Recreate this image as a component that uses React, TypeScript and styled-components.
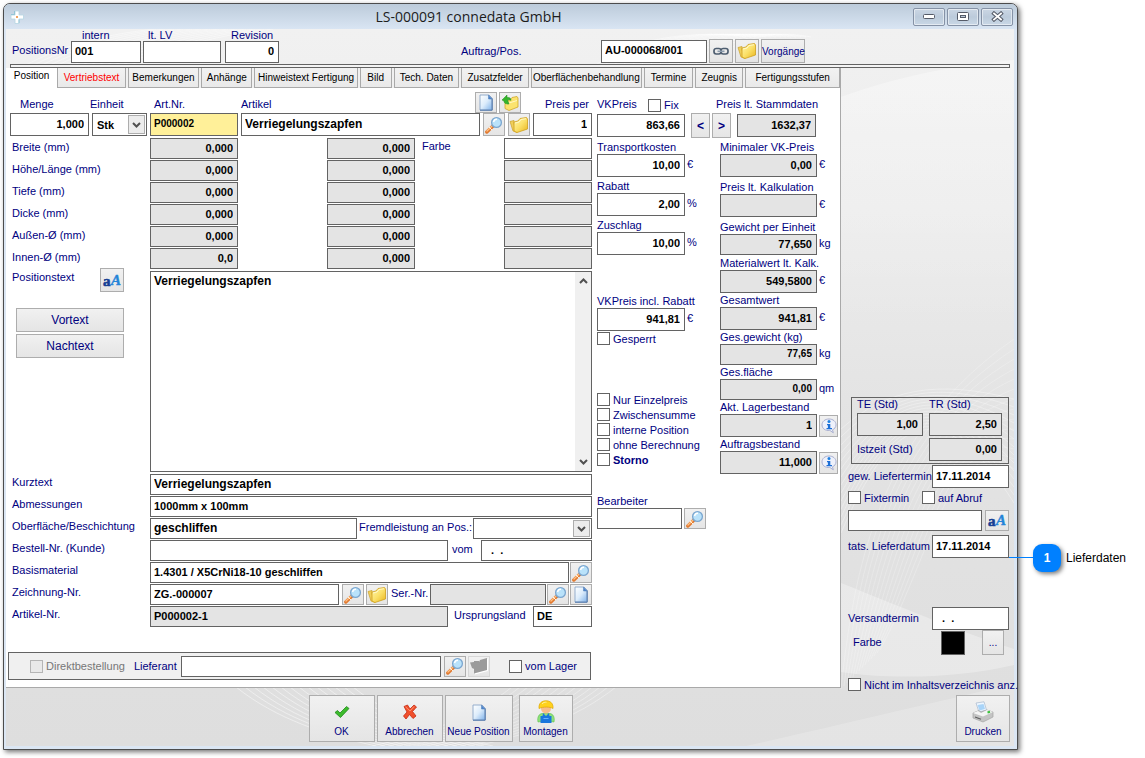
import React from "react";
import styled, { createGlobalStyle, css } from "styled-components";

const navy = "#00007f";
const line = "#636363";

const GlobalStyle = createGlobalStyle`
  *, *::before, *::after { box-sizing: border-box; }
  body { margin: 0; background: #fff; font-family: "Liberation Sans", Arial, sans-serif; font-size: 11px; color: ${navy}; }
  button, input, select, textarea { font-family: inherit; font-size: 11px; margin: 0; }
`;

/* ---------- window frame ---------- */

const Page = styled.div`
  padding: 3px 127px 8px 3px;
`;

const Window = styled.main`
  border: 1px solid #4c4c4c;
  border-radius: 7px 7px 0 0;
  background: #dbe6f3;
  box-shadow: 2px 2px 5px rgba(0, 0, 0, 0.55);
  padding: 0 3px 3px 2px;
`;

const TitleBar = styled.header`
  display: flex;
  align-items: center;
  height: 25px;
  margin: 0 -3px 0 -2px;
  padding: 0 4px 0 6px;
  border-radius: 6px 6px 0 0;
  background: linear-gradient(#bccbda, #d9e5f3);
`;

const Title = styled.h1`
  flex: 1;
  margin: 0;
  text-align: center;
  font: 14px/24px "Open Sans", "Segoe UI", sans-serif;
  color: #1c1c1c;
`;

const CaptionButtons = styled.div`
  display: flex;
  gap: 2px;
`;

const CaptionButton = styled.button`
  display: grid;
  place-items: center;
  width: 32px;
  height: 18px;
  padding: 0;
  border: 1px solid #8592a6;
  border-radius: 2px;
  background: linear-gradient(#cbd7e4, #bccbdb 50%, #c9d7e6);
  box-shadow: inset 0 0 0 1px rgba(255, 255, 255, 0.5);
`;

const Content = styled.div`
  position: relative;
  isolation: isolate;
  background: linear-gradient(#f1f1f1, #ececec 25%, #e3e3e3 55%, #e1e1e1 75%, #dedede);
`;

const Backdrop = styled.svg`
  position: absolute;
  inset: 0;
  z-index: -1;
  width: 100%;
  height: 100%;
`;

/* ---------- shared controls ---------- */

const Label = styled.label<{ $w?: number; $strong?: boolean; $muted?: boolean }>`
  flex: none;
  ${(p) => p.$w && `width: ${p.$w}px;`}
  line-height: 13px;
  white-space: nowrap;
  color: ${(p) => (p.$muted ? "#777" : navy)};
  font-weight: ${(p) => (p.$strong ? "bold" : "normal")};
`;

const Input = styled.input<{ $w?: number; $tall?: boolean; $right?: boolean; $size?: number; $tone?: string }>`
  ${(p) => (p.$w ? `flex: none; width: ${p.$w}px;` : "flex: 1; min-width: 0; width: 0;")}
  height: ${(p) => (p.$tall ? 23 : 21)}px;
  padding: 0 4px 2px 3px;
  border: 1px solid ${line};
  border-radius: 0;
  background: ${(p) => p.$tone || "#fff"};
  color: #000;
  font-weight: bold;
  font-size: ${(p) => p.$size || 11}px;
  text-align: ${(p) => (p.$right ? "right" : "left")};
  outline: none;
`;

const grey = "#e4e4e4";

const face = css`
  border: 1px solid #adadad;
  background: linear-gradient(#f1f1f1, #e5e5e5);
  color: ${navy};
  padding: 0;
`;

const IconButton = styled.button<{ $size?: number; $h?: number; $quiet?: boolean }>`
  ${face}
  flex: none;
  display: grid;
  place-items: center;
  width: ${(p) => p.$size || 22}px;
  height: ${(p) => p.$h || p.$size || 21}px;
  ${(p) => p.$quiet && "border-color: #d6d6d6;"}
`;

const TextButton = styled.button<{ $w: number; $h: number; $small?: boolean; $strong?: boolean }>`
  ${face}
  flex: none;
  width: ${(p) => p.$w}px;
  height: ${(p) => p.$h}px;
  font-size: ${(p) => (p.$small ? 10 : 12)}px;
  font-weight: ${(p) => (p.$strong ? "bold" : "normal")};
`;

const Box = styled.input.attrs({ type: "checkbox" })`
  appearance: none;
  flex: none;
  width: 13px;
  height: 13px;
  border: 1px solid ${line};
  background: #fff;
  &:disabled { border-color: #b5b5b5; background: #e9e9e9; }
`;

const CheckLabel = styled.label<{ $strong?: boolean; $muted?: boolean }>`
  display: flex;
  align-items: center;
  gap: 3px;
  height: 15px;
  white-space: nowrap;
  color: ${(p) => (p.$muted ? "#777" : navy)};
  font-weight: ${(p) => (p.$strong ? "bold" : "normal")};
`;

const Check = (p: { text: string; strong?: boolean; disabled?: boolean }) => (
  <CheckLabel $strong={p.strong} $muted={p.disabled}>
    <Box disabled={p.disabled} />
    {p.text}
  </CheckLabel>
);

const SelectShell = styled.div<{ $w: number; $h: number }>`
  position: relative;
  flex: none;
  width: ${(p) => p.$w}px;
  height: ${(p) => p.$h}px;
`;

const SelectBox = styled.select`
  appearance: none;
  width: 100%;
  height: 100%;
  padding: 0 20px 0 4px;
  border: 1px solid ${line};
  border-radius: 0;
  background: #fff;
  color: #000;
  font-weight: bold;
`;

const SelectArrow = styled.span`
  position: absolute;
  top: 2px;
  right: 2px;
  bottom: 2px;
  width: 17px;
  display: grid;
  place-items: center;
  border: 1px solid #adadad;
  background: #ececec;
  pointer-events: none;
`;

const Chevron = ({ up }: { up?: boolean }) => (
  <svg width="9" height="6" viewBox="0 0 9 6" fill="none" stroke="#505050" strokeWidth="2">
    <path d={up ? "M1 5 4.500 1.500 8 5" : "M1 1 4.500 4.500 8 1"} />
  </svg>
);

const Select = (p: { id: string; w: number; h: number; value: string }) => (
  <SelectShell $w={p.w} $h={p.h}>
    <SelectBox id={p.id} defaultValue={p.value}>
      <option>{p.value}</option>
    </SelectBox>
    <SelectArrow>
      <Chevron />
    </SelectArrow>
  </SelectShell>
);

/* ---------- icons ---------- */

const Doc = () => (
  <svg width="16" height="17" viewBox="0 0 16 17">
    <defs>
      <linearGradient id="doc" x1="0" y1="0" x2="1" y2="1">
        <stop offset="0" stopColor="#fff" />
        <stop offset=".5" stopColor="#dcecfb" />
        <stop offset="1" stopColor="#7fb2ea" />
      </linearGradient>
    </defs>
    <path d="M2 1h9l3 3v12H2z" fill="url(#doc)" stroke="#8ba6c8" strokeWidth=".9" />
    <path d="M14.200 4.500V16.200H2" fill="none" stroke="#4d74a8" />
    <path d="M10.500 1v4H14z" fill="#4b83cf" stroke="#5d86bb" strokeWidth=".6" />
  </svg>
);

const Folder = ({ muted }: { muted?: boolean }) => (
  <svg width="20" height="18" viewBox="0 0 20 18">
    <defs>
      <linearGradient id="folder" x1="0" y1="0" x2="1" y2="1">
        <stop offset="0" stopColor="#fff6ae" />
        <stop offset=".5" stopColor="#fbe16a" />
        <stop offset="1" stopColor="#e9b51d" />
      </linearGradient>
    </defs>
    {muted ? (
      <>
        <path d="M2 6.500 6 6V5h5v1l1-2 7-2v12L6 17.500V13l-2-1z" fill="#fff" />
        <path d="M1 5.500 5 5V4h5v1l1-2 7-2v12L5 16.500V12L3 11z" fill="#9b9b9b" />
      </>
    ) : (
      <>
        <path d="M1 5.500 5 4.500V8l3 8.500-4-1.500z" fill="#f0cf5b" stroke="#caa02a" strokeWidth=".7" />
        <path d="M5 6 9 5l2-2.500L17.500 1.500 18.500 3v10L8 16.500 5 15z" fill="url(#folder)" stroke="#cfa01c" strokeWidth=".8" />
        <path d="M6 7 10 6l2-2.500 5-.8" fill="none" stroke="#fffbd2" strokeWidth=".9" />
      </>
    )}
  </svg>
);

const ImportFolder = () => (
  <svg width="18" height="18" viewBox="0 0 18 18">
    <path d="M4 8 9 6l2-2.500 5-1 1 1.500v9l-9 3.500-4-2z" fill="#fbe36e" stroke="#d0a727" strokeWidth=".8" />
    <path d="M5 10 16 6.500" stroke="#fff8c4" />
    <path d="M1 6 6 1v2.500c3-.5 4 1 4 3C9 5.500 8 5.500 6.500 6L8 10c-3 .5-5-1-5-3z" fill="#35b52b" stroke="#1b8a1b" strokeWidth=".5" />
  </svg>
);

const Magnifier = () => (
  <svg width="18" height="18" viewBox="0 0 18 18">
    <path d="M8 10 1.800 16" stroke="#e27a30" strokeWidth="3.400" strokeLinecap="round" />
    <path d="M7.300 9.800 2 15" stroke="#ffc083" strokeWidth="1.400" strokeLinecap="round" />
    <path d="m4 11 3 3" stroke="#fff2df" strokeWidth="1" />
    <path d="m7 8.500 2.500 2.500" stroke="#8b95a3" strokeWidth="2" />
    <circle cx="11.500" cy="6.500" r="4.900" fill="#b9e2fa" stroke="#7ba6cf" strokeWidth="1.300" />
    <path d="M8.500 6a3.500 3.500 0 0 1 3.500-2.800" fill="none" stroke="#fff" strokeWidth="1.500" />
  </svg>
);

const LinkIcon = () => (
  <svg width="16" height="9" viewBox="0 0 16 9" fill="none">
    <rect x="1" y="1.500" width="7" height="5.500" rx="2.200" stroke="#4e5e70" strokeWidth="1.700" />
    <rect x="8" y="1.500" width="7" height="5.500" rx="2.200" stroke="#4e5e70" strokeWidth="1.700" />
    <path d="M4.500 4.300h7" stroke="#8c9cad" strokeWidth="1.600" />
  </svg>
);

const FontIcon = () => (
  <svg width="20" height="19" viewBox="0 0 20 19" aria-hidden="true">
    <g fontFamily="Liberation Serif" fontWeight="bold">
      <text x="1" y="15" fontSize="15" fill="#173f94" stroke="#173f94" strokeWidth=".6">a</text>
      <text x="9" y="14" fontSize="15" fontStyle="italic" fill="#2484d8" stroke="#2484d8" strokeWidth=".4">A</text>
    </g>
  </svg>
);

const Info = () => (
  <svg width="16" height="16" viewBox="0 0 16 16">
    <path d="M8 1c4 0 7 2.500 7 5.800 0 2.500-1.500 4-3.500 5l.8 3-3.500-2.400C4 13 1 10.300 1 6.900 1 3.500 4 1 8 1z" fill="#eef1fb" stroke="#a9afd0" />
    <circle cx="8" cy="3.600" r="1.500" fill="#1d7fe0" />
    <path d="M6 6h3.300v4H11v1.300H5.500V10h1.400V7.300H6z" fill="#1d6fd6" />
  </svg>
);

const Tick = () => (
  <svg width="16" height="14" viewBox="0 0 16 14">
    <path d="M1 7.500 3.500 5.500 6 8 12.500 1.500 15 3.500 6.500 12.500z" fill="#3dbb2c" stroke="#20891a" strokeWidth=".8" />
  </svg>
);

const Cross = () => (
  <svg width="16" height="16" viewBox="0 0 16 16">
    <path d="M2 2.500 5.500 1 8 5 12 1l2.500 2L10.500 7.500 14 12l-3 2.500L7.500 10.500 4 15 1.500 12 5 8z" fill="#f0502c" stroke="#c52a12" strokeWidth=".8" />
    <path d="M3.500 2.800 8 7l4-4.500" fill="none" stroke="#ff9a78" strokeWidth=".9" />
  </svg>
);

const Worker = () => (
  <svg width="20" height="24" viewBox="0 0 20 24">
    <path d="M2 22c-1-5 1-8 4-8.500h8c3 .5 5 3.500 4 8.500l-3-.5H5z" fill="#8ee27a" stroke="#5bbd4c" strokeWidth=".6" />
    <path d="M4.500 23v-7h2l.5-3 3 3 3-3 .5 3h2v7z" fill="#1976dd" />
    <path d="M7.500 18.500h5" stroke="#66b2ff" />
    <circle cx="10" cy="8.500" r="5" fill="#f8bd8a" />
    <path d="M3 8.500C2.500 3 6 .8 10 .8S17.500 3 17 8.500c-3-1.800-10-2-14 0z" fill="#ffd21c" stroke="#dda400" strokeWidth=".7" />
    <path d="M6 4c1-1.500 3-2 4.500-1.800" stroke="#fff3a0" fill="none" />
  </svg>
);

const Printer = () => (
  <svg width="22" height="22" viewBox="0 0 22 22">
    <path d="M4 2 12 .800 14.500 9 7 11z" fill="#eef6ff" stroke="#a8b8cb" strokeWidth=".7" />
    <path d="M5.500 4 11.500 3l1.500 5-5.500 1.500z" fill="#a9d4f8" />
    <path d="M1 12 7 9.500 9 11l6-2 6 2v5l-10 5L1 17z" fill="#c4c4c4" stroke="#a5a5a5" strokeWidth=".7" />
    <path d="m1 12 10 3.500L21 11l-6-2-6 3-3-2z" fill="#f5f5f5" />
    <path d="m3 16 6 2.200" stroke="#5c5c5c" strokeWidth="1.200" />
    <path d="m15.500 11.500 2.500-.8" stroke="#38c23a" strokeWidth="2" />
  </svg>
);

const AppLogo = () => (
  <svg width="14" height="14" viewBox="0 0 14 14">
    <path d="M5 1h4v4h4.500v4H9v4.500H5V9H1V5h4z" fill="#fff" stroke="#b5d5e2" strokeWidth=".8" />
    <path d="M4.500 1v3.500H1M9 9.500V13" fill="none" stroke="#7fbdd0" strokeWidth=".7" />
    <circle cx="7" cy="7" r="1" fill="#e8862e" />
  </svg>
);

/* ---------- header ---------- */

const HeaderBar = styled.div`
  display: flex;
  align-items: flex-end;
  gap: 2px;
  height: 35px;
  padding: 0 4px 1px 6px;
`;

const Lead = styled(Label)`
  width: 57px;
  padding-bottom: 4px;
  line-height: 17px;
`;

const Stack = styled.div<{ $inset?: number; $after?: number }>`
  display: flex;
  flex-direction: column;
  flex: none;
  margin-right: ${(p) => p.$after || 0}px;
  > label { padding-left: ${(p) => p.$inset || 0}px; line-height: 12px; }
  > input { flex: none; height: 22px; }
`;

const Spacer = styled.div<{ $w?: number }>`
  flex: ${(p) => (p.$w ? "none" : 1)};
  width: ${(p) => p.$w || 0}px;
`;

const OrderGroup = styled.div`
  display: flex;
  align-items: center;
  gap: 2px;
  margin-right: 205px;
`;

const Rule = styled.hr`
  height: 4px;
  margin: 0 4px;
  border: 1px solid ${line};
  background: #f4f4f4;
`;

/* ---------- tabs ---------- */

const Workspace = styled.div`
  display: flex;
`;

const Panel = styled.section`
  flex: 1;
  min-width: 0;
  border-right: 1px solid #a9a9a9;
  border-bottom: 1px solid #a9a9a9;
  background: #fff;
`;

const Tabs = styled.nav`
  display: flex;
  gap: 2px;
  height: 20px;
  background: #f0f0f0;
`;

const Tab = styled.button<{ $grow: number; $active?: boolean; $alert?: boolean }>`
  flex: ${(p) => p.$grow} 1 0;
  min-width: 0;
  padding: 0;
  border: solid #a9a9a9;
  border-width: 0 1px 1px;
  background: linear-gradient(#f2f2f2, #e9e9e9);
  color: ${(p) => (p.$alert ? "#ff0000" : "#000")};
  font-size: 10px;
  white-space: nowrap;
  ${(p) => p.$active && "border-color: #fff; background: #fff; padding-bottom: 4px; margin-right: -2px;"}
`;

const tabs: [string, number][] = [
  ["Position", 51],
  ["Vertriebstext", 69],
  ["Bemerkungen", 72],
  ["Anhänge", 51],
  ["Hinweistext Fertigung", 105],
  ["Bild", 31],
  ["Tech. Daten", 66],
  ["Zusatzfelder", 68],
  ["Oberflächenbehandlung", 113],
  ["Termine", 49],
  ["Zeugnis", 48],
  ["Fertigungsstufen", 96],
];

/* ---------- position form ---------- */

const Form = styled.div`
  display: flex;
  gap: 5px;
  padding: 3px 2px 0 4px;
`;

const MainColumn = styled.div`
  flex: 1;
  min-width: 0;
`;

const LabelRow = styled.div`
  display: flex;
  align-items: flex-end;
  height: 22px;
  gap: 2px;
  > label { padding-bottom: 1px; line-height: 15px; }
`;

const Row = styled.div`
  display: flex;
  align-items: center;
  gap: 2px;
`;

const ItemRow = styled(Row)`
  gap: 3px;
  height: 23px;
`;

const Split = styled.div`
  display: grid;
  grid-template-columns: 140px 1fr;
`;

const LabelColumn = styled.div`
  display: flex;
  flex-direction: column;
  padding-left: 2px;
  > label { line-height: 22px; }
`;

const TextTools = styled.div`
  display: flex;
  justify-content: space-between;
  width: 112px;
  padding-bottom: 16px;
  > label { line-height: 18px; }
`;

const SideButtons = styled.div`
  display: flex;
  flex-direction: column;
  gap: 2px;
  padding-left: 4px;
`;

const FieldColumn = styled.div`
  display: flex;
  flex-direction: column;
  gap: 1px;
  padding-top: 2px;
`;

const MeasureRow = styled.div`
  display: grid;
  grid-template-columns: 88px 1fr 88px 1fr 88px;
  > input:nth-of-type(2) { grid-column: 3; }
  > label { grid-column: 4; padding-left: 7px; line-height: 17px; }
  > input:nth-of-type(3) { grid-column: 5; }
`;

const Editor = styled.div`
  display: flex;
  height: 201px;
  margin-top: 1px;
  border: 1px solid ${line};
  background: #fff;
`;

const EditorText = styled.textarea`
  flex: 1;
  min-width: 0;
  padding: 3px;
  border: 0;
  resize: none;
  overflow: hidden;
  color: #000;
  font-weight: bold;
  font-size: 12px;
  line-height: 13px;
  outline: none;
`;

const Rail = styled.div`
  display: flex;
  flex-direction: column;
  justify-content: space-between;
  align-items: center;
  width: 16px;
  padding: 6px 0;
  background: #f0f0f0;
`;

const DetailList = styled.div`
  display: flex;
  flex-direction: column;
  gap: 1px;
  padding-top: 2px;
`;

const DetailRow = styled.div`
  display: flex;
  align-items: center;
  height: 21px;
  > label { padding-bottom: 2px; }
  > label:first-child { width: 140px; padding: 0 0 4px 2px; }
`;

const SupplierBar = styled.div`
  display: flex;
  align-items: center;
  height: 28px;
  margin: 25px 1px 7px -2px;
  padding: 0 13px 0 21px;
  border: 1px solid ${line};
  background: #f0f0f0;
`;

/* ---------- price columns ---------- */

const PriceArea = styled.div`
  flex: none;
  width: 241px;
`;

const PriceHead = styled(LabelRow)`
  > label:nth-child(1) { width: 49px; }
`;

const PriceTop = styled(Row)`
  height: 25px;
`;

const PriceColumns = styled.div`
  display: grid;
  grid-template-columns: 123px 118px;
  padding-top: 3px;
`;

const Group = styled.div<{ $gap?: number; $top?: number }>`
  display: flex;
  flex-direction: column;
  gap: ${(p) => p.$gap || 0}px;
  padding-top: ${(p) => p.$top || 0}px;
`;

const PriceBlock = styled.div`
  display: flex;
  flex-direction: column;
`;

const Unit = styled.span`
  padding-bottom: 3px;
`;

interface PriceProps {
  id: string;
  label: string;
  value: string;
  unit?: string;
  locked?: boolean;
  low?: boolean;
  small?: boolean;
  info?: boolean;
}

const PriceField = (p: PriceProps) => (
  <PriceBlock>
    <Label htmlFor={p.id}>{p.label}</Label>
    <Row>
      <Input
        id={p.id}
        $w={p.locked ? 97 : 88}
        $tall={!p.low}
        $right
        $size={p.small ? 10 : 11}
        $tone={p.locked ? grey : "#fff"}
        readOnly={p.locked}
        defaultValue={p.value}
      />
      {p.unit && <Unit>{p.unit}</Unit>}
      {p.info && (
        <IconButton $size={19} $h={22} aria-label={`Info ${p.label}`}>
          <Info />
        </IconButton>
      )}
    </Row>
  </PriceBlock>
);

/* ---------- delivery column ---------- */

const Sidebar = styled.aside`
  flex: none;
  width: 173px;
  display: flex;
  flex-direction: column;
  margin-bottom: -4px;
  padding: 329px 5px 0 6px;
`;

const TimeBox = styled.fieldset`
  display: grid;
  grid-template-columns: 66px 73px;
  column-gap: 6px;
  row-gap: 2px;
  align-items: center;
  height: 67px;
  margin: 0 0 0 4px;
  padding: 0 5px 4px;
  border: 1px solid ${line};
`;

const SideRow = styled.div<{ $gap?: number; $h: number }>`
  position: relative;
  display: flex;
  align-items: center;
  height: ${(p) => p.$h}px;
  margin-top: ${(p) => p.$gap || 0}px;
  padding-left: 1px;
  > label:first-child { flex: 1; }
`;

const CheckPair = styled.div`
  display: grid;
  grid-template-columns: 74px auto;
  margin-top: 2px;
  padding-left: 1px;
`;

const Swatch = styled.input`
  appearance: none;
  width: 24px;
  height: 24px;
  margin: 0 17px 0 0;
  padding: 0;
  border: 1px solid ${line};
  background: #000;
  &::-webkit-color-swatch-wrapper { padding: 0; }
  &::-webkit-color-swatch { border: 0; }
`;

const Callout = styled.div`
  position: absolute;
  left: 100%;
  top: 9px;
  display: flex;
  align-items: center;
  color: #000;
  font-size: 12px;
  white-space: nowrap;
`;

const CalloutLine = styled.span`
  width: 24px;
  height: 14px;
  margin-bottom: 14px;
  border-bottom: 1px solid #0080ff;
`;

const CalloutBadge = styled.span`
  display: grid;
  place-items: center;
  width: 28px;
  height: 28px;
  margin-right: 5px;
  border-radius: 9px;
  background: #0080ff;
  box-shadow: 2px 2px 4px rgba(0, 0, 0, 0.5);
  color: #fff;
  font-weight: bold;
`;

/* ---------- footer ---------- */

const Footer = styled.footer`
  display: flex;
  padding: 7px 4px 4px 0;
`;

const Actions = styled.div`
  flex: 1;
  display: flex;
  justify-content: center;
  gap: 2px;
`;

const ActionButton = styled.button<{ $w: number; $apart?: boolean }>`
  ${face}
  display: flex;
  flex-direction: column;
  align-items: center;
  justify-content: flex-end;
  gap: 2px;
  width: ${(p) => p.$w}px;
  height: 47px;
  padding-bottom: 4px;
  font-size: 10px;
  white-space: nowrap;
  ${(p) => p.$apart && "margin-left: 4px;"}
  > span { display: grid; place-items: center; height: 24px; }
`;

const FooterEnd = styled.div`
  display: flex;
  justify-content: flex-end;
  width: 135px;
`;

const Action = (p: { text: string; w: number; apart?: boolean; children: React.ReactNode }) => (
  <ActionButton $w={p.w} $apart={p.apart}>
    <span>{p.children}</span>
    {p.text}
  </ActionButton>
);

const measures = [
  ["Breite (mm)", "0,000"],
  ["Höhe/Länge (mm)", "0,000"],
  ["Tiefe (mm)", "0,000"],
  ["Dicke (mm)", "0,000"],
  ["Außen-Ø (mm)", "0,000"],
  ["Innen-Ø (mm)", "0,0"],
];

const rays = Array.from({ length: 14 }, (_, i) => i);

const Waves = () => (
  <Backdrop viewBox="0 0 1008 717" preserveAspectRatio="none" fill="none" aria-hidden="true">
    <defs>
      <linearGradient id="sheen" x1="0" y1="0" x2="0" y2="1">
        <stop offset="0" stopColor="#fff" stopOpacity=".35" />
        <stop offset="1" stopColor="#fff" stopOpacity="0" />
      </linearGradient>
    </defs>
    <path d="M760 100C850 55 930 38 1008 31V300H760z" fill="url(#sheen)" />
    <path d="M835 554C900 580 960 605 1008 620V636C950 650 880 650 835 643z" fill="#fff" opacity=".3" />
    <path d="M740 717C860 690 950 668 1008 655V717z" fill="#fff" opacity=".2" />
    <g stroke="#fff">
      {rays.map((i) => (
        <path key={i} d={`M${835 + i * 3} ${660 - i * 3}C${850 + i * 6} 520 ${880 + i * 5} 400 1008 ${310 + i * 10}`} strokeOpacity=".22" />
      ))}
      {rays.map((i) => (
        <path key={i} d={`M835 ${400 + i * 8}C880 ${360 + i * 3} 930 350 1008 ${370 + i * 8}`} strokeOpacity=".3" />
      ))}
      {rays.map((i) => (
        <path key={i} d={`M${20 + i * 8} 36C${50 + i * 9} 20 ${90 + i * 9} 6 ${150 + i * 9} 0`} strokeOpacity=".4" />
      ))}
      {rays.map((i) => (
        <path key={i} d={`M${590 + i * 9} 36C${620 + i * 8} 10 ${690 + i * 6} 0 ${740 + i * 5} 8`} strokeOpacity=".4" />
      ))}
      {rays.map((i) => (
        <path key={i} d={`M${230 + i * 9} 658C${270 + i * 9} 690 ${320 + i * 9} 706 ${370 + i * 9} 717`} strokeOpacity=".45" />
      ))}
      {rays.map((i) => (
        <path key={i} d={`M${610 - i * 8} 658C${570 - i * 8} 690 ${520 - i * 8} 706 ${470 - i * 8} 717`} strokeOpacity=".35" />
      ))}
    </g>
  </Backdrop>
);

export default function App() {
  return (
    <Page>
      <GlobalStyle />
      <Window>
        <TitleBar>
          <AppLogo />
          <Title>LS-000091 connedata GmbH</Title>
          <CaptionButtons>
            <CaptionButton aria-label="Minimieren">
              <svg width="12" height="6" viewBox="0 0 12 6">
                <rect x=".5" y=".5" width="11" height="4" rx="1" fill="#fff" stroke="#555b68" />
              </svg>
            </CaptionButton>
            <CaptionButton aria-label="Maximieren">
              <svg width="12" height="10" viewBox="0 0 12 10">
                <rect x=".5" y=".5" width="11" height="8" rx="1" fill="#fff" stroke="#555b68" />
                <rect x="3.500" y="3.500" width="5" height="2" fill="#bccbdb" stroke="#555b68" />
              </svg>
            </CaptionButton>
            <CaptionButton aria-label="Schließen">
              <svg width="13" height="11" viewBox="0 0 13 11" strokeLinecap="square">
                <path d="m3 2.500 7 6m0-6-7 6" stroke="#555b68" strokeWidth="3.800" />
                <path d="m3 2.500 7 6m0-6-7 6" stroke="#fff" strokeWidth="1.800" />
              </svg>
            </CaptionButton>
          </CaptionButtons>
        </TitleBar>

        <Content>
          <Waves />
          <HeaderBar>
            <Lead htmlFor="intern">PositionsNr</Lead>
            <Stack $inset={11}>
              <Label htmlFor="intern">intern</Label>
              <Input id="intern" $w={70} defaultValue="001" />
            </Stack>
            <Stack $inset={5} $after={2}>
              <Label htmlFor="lv">lt. LV</Label>
              <Input id="lv" $w={78} />
            </Stack>
            <Stack $inset={6}>
              <Label htmlFor="revision">Revision</Label>
              <Input id="revision" $w={54} $right defaultValue="0" />
            </Stack>
            <Spacer />
            <OrderGroup>
              <Label htmlFor="order" $w={138}>Auftrag/Pos.</Label>
              <Input id="order" $w={106} $tall defaultValue="AU-000068/001" />
              <IconButton $size={24} aria-label="Verknüpfung"><LinkIcon /></IconButton>
              <IconButton $size={24} aria-label="Auftrag öffnen"><Folder /></IconButton>
              <TextButton $w={44} $h={24} $small>Vorgänge</TextButton>
            </OrderGroup>
          </HeaderBar>
          <Rule />

          <Workspace>
            <Panel>
              <Tabs>
                {tabs.map(([name, grow], i) => (
                  <Tab key={name} $grow={grow} $active={i === 0} $alert={i === 1}>{name}</Tab>
                ))}
              </Tabs>

              <Form>
                <MainColumn>
                  <LabelRow>
                    <Spacer $w={8} />
                    <Label htmlFor="menge" $w={68}>Menge</Label>
                    <Label htmlFor="einheit" $w={62}>Einheit</Label>
                    <Label htmlFor="artnr" $w={85}>Art.Nr.</Label>
                    <Label htmlFor="artikel">Artikel</Label>
                    <Spacer />
                    <IconButton aria-label="Neuer Artikel"><Doc /></IconButton>
                    <IconButton aria-label="Artikel übernehmen"><ImportFolder /></IconButton>
                    <Spacer $w={20} />
                    <Label htmlFor="preisper" $w={47}>Preis per</Label>
                  </LabelRow>
                  <ItemRow>
                    <Input id="menge" $w={79} $tall $right defaultValue="1,000" />
                    <Select id="einheit" w={55} h={23} value="Stk" />
                    <Input id="artnr" $w={88} $tall $size={10} $tone="#fff099" defaultValue="P000002" />
                    <Input id="artikel" $tall $size={12} defaultValue="Verriegelungszapfen" />
                    <IconButton $h={23} aria-label="Artikel suchen"><Magnifier /></IconButton>
                    <IconButton $h={23} aria-label="Artikel öffnen"><Folder /></IconButton>
                    <Input id="preisper" $w={59} $tall $right defaultValue="1" />
                  </ItemRow>

                  <Split>
                    <LabelColumn>
                      {measures.map(([name], i) => (
                        <Label key={name} htmlFor={`m${i}`}>{name}</Label>
                      ))}
                      <TextTools>
                        <Label htmlFor="postext">Positionstext</Label>
                        <IconButton $size={24} aria-label="Schrift"><FontIcon /></IconButton>
                      </TextTools>
                      <SideButtons>
                        <TextButton $w={108} $h={24}>Vortext</TextButton>
                        <TextButton $w={108} $h={24}>Nachtext</TextButton>
                      </SideButtons>
                    </LabelColumn>
                    <FieldColumn>
                      {measures.map(([name, value], i) => (
                        <MeasureRow key={name}>
                          <Input id={`m${i}`} $w={88} $right $tone={grey} readOnly defaultValue={value} />
                          <Input aria-label={`${name} 2`} $w={88} $right $tone={grey} readOnly defaultValue="0,000" />
                          {i === 0 && <Label htmlFor="farbe">Farbe</Label>}
                          {i === 0 ? (
                            <Input id="farbe" $w={88} />
                          ) : (
                            <Input aria-label={`${name} 3`} $w={88} $tone={grey} readOnly />
                          )}
                        </MeasureRow>
                      ))}
                      <Editor>
                        <EditorText id="postext" defaultValue="Verriegelungszapfen" />
                        <Rail>
                          <Chevron up />
                          <Chevron />
                        </Rail>
                      </Editor>
                    </FieldColumn>
                  </Split>

                  <DetailList>
                    <DetailRow>
                      <Label htmlFor="kurz">Kurztext</Label>
                      <Input id="kurz" $size={12} defaultValue="Verriegelungszapfen" />
                    </DetailRow>
                    <DetailRow>
                      <Label htmlFor="abm">Abmessungen</Label>
                      <Input id="abm" defaultValue="1000mm x 100mm" />
                    </DetailRow>
                    <DetailRow>
                      <Label htmlFor="ober">Oberfläche/Beschichtung</Label>
                      <Input id="ober" $size={12} defaultValue="geschliffen" />
                      <Spacer $w={2} />
                      <Label htmlFor="fremd" $w={114}>Fremdleistung an Pos.:</Label>
                      <Select id="fremd" w={119} h={21} value="" />
                    </DetailRow>
                    <DetailRow>
                      <Label htmlFor="bestell">Bestell-Nr. (Kunde)</Label>
                      <Input id="bestell" />
                      <Spacer $w={4} />
                      <Label htmlFor="vom" $w={29}>vom</Label>
                      <Input id="vom" $w={111} defaultValue="  .  ." />
                    </DetailRow>
                    <DetailRow>
                      <Label htmlFor="basis">Basismaterial</Label>
                      <Input id="basis" defaultValue="1.4301 / X5CrNi18-10 geschliffen" />
                      <Spacer $w={1} />
                      <IconButton aria-label="Material suchen"><Magnifier /></IconButton>
                    </DetailRow>
                    <DetailRow>
                      <Label htmlFor="zeich">Zeichnung-Nr.</Label>
                      <Input id="zeich" defaultValue="ZG.-000007" />
                      <Spacer $w={3} />
                      <IconButton aria-label="Zeichnung suchen"><Magnifier /></IconButton>
                      <Spacer $w={2} />
                      <IconButton aria-label="Zeichnung öffnen"><Folder /></IconButton>
                      <Spacer $w={3} />
                      <Label htmlFor="serie" $w={39}>Ser.-Nr.</Label>
                      <Input id="serie" $w={116} $tone={grey} readOnly />
                      <Spacer $w={1} />
                      <IconButton aria-label="Serie suchen"><Magnifier /></IconButton>
                      <Spacer $w={1} />
                      <IconButton aria-label="Neue Serie"><Doc /></IconButton>
                    </DetailRow>
                    <DetailRow>
                      <Label htmlFor="artikelnr">Artikel-Nr.</Label>
                      <Input id="artikelnr" $tone={grey} readOnly defaultValue="P000002-1" />
                      <Spacer $w={6} />
                      <Label htmlFor="land" $w={79}>Ursprungsland</Label>
                      <Input id="land" $w={59} defaultValue="DE" />
                    </DetailRow>
                  </DetailList>

                  <SupplierBar>
                    <Check text="Direktbestellung" disabled />
                    <Spacer $w={9} />
                    <Label htmlFor="lieferant" $w={47}>Lieferant</Label>
                    <Input id="lieferant" />
                    <Spacer $w={3} />
                    <IconButton aria-label="Lieferant suchen"><Magnifier /></IconButton>
                    <Spacer $w={2} />
                    <IconButton $quiet disabled aria-label="Lieferant öffnen"><Folder muted /></IconButton>
                    <Spacer $w={19} />
                    <Check text="vom Lager" />
                  </SupplierBar>
                </MainColumn>

                <PriceArea>
                  <PriceHead>
                    <Label htmlFor="vk">VKPreis</Label>
                    <Check text="Fix" />
                    <Spacer />
                    <Label htmlFor="stamm" $w={122}>Preis lt. Stammdaten</Label>
                  </PriceHead>
                  <PriceTop>
                    <Input id="vk" $w={88} $tall $right defaultValue="863,66" />
                    <Spacer $w={2} />
                    <TextButton $w={19} $h={25} $strong>&lt;</TextButton>
                    <TextButton $w={19} $h={25} $strong>&gt;</TextButton>
                    <Spacer $w={2} />
                    <Input id="stamm" $w={79} $tall $right $tone={grey} readOnly defaultValue="1632,37" />
                  </PriceTop>
                  <PriceColumns>
                    <div>
                      <Group $gap={3}>
                        <PriceField id="transport" label="Transportkosten" value="10,00" unit="€" />
                        <PriceField id="rabatt" label="Rabatt" value="2,00" unit="%" />
                        <PriceField id="zuschlag" label="Zuschlag" value="10,00" unit="%" />
                      </Group>
                      <Group $top={40}>
                        <PriceField id="incl" label="VKPreis incl. Rabatt" value="941,81" unit="€" />
                        <Check text="Gesperrt" />
                      </Group>
                      <Group $top={46}>
                        <Check text="Nur Einzelpreis" />
                        <Check text="Zwischensumme" />
                        <Check text="interne Position" />
                        <Check text="ohne Berechnung" />
                        <Check text="Storno" strong />
                      </Group>
                      <Group $top={28}>
                        <Label htmlFor="bearb">Bearbeiter</Label>
                        <Row>
                          <Input id="bearb" $w={85} />
                          <IconButton aria-label="Bearbeiter suchen"><Magnifier /></IconButton>
                        </Row>
                      </Group>
                    </div>
                    <div>
                      <Group $gap={4}>
                        <PriceField id="minvk" label="Minimaler VK-Preis" value="0,00" unit="€" locked />
                        <PriceField id="kalk" label="Preis lt. Kalkulation" value="" unit="€" locked />
                        <PriceField id="gewicht" label="Gewicht per Einheit" value="77,650" unit="kg" locked low />
                      </Group>
                      <Group $gap={1} $top={2}>
                        <PriceField id="material" label="Materialwert lt. Kalk." value="549,5800" unit="€" locked />
                        <PriceField id="gesamt" label="Gesamtwert" value="941,81" unit="€" locked />
                        <PriceField id="gesgew" label="Ges.gewicht (kg)" value="77,65" unit="kg" locked low small />
                        <PriceField id="gesfl" label="Ges.fläche" value="0,00" unit="qm" locked low small />
                        <PriceField id="lager" label="Akt. Lagerbestand" value="1" locked info />
                        <PriceField id="auftrag" label="Auftragsbestand" value="11,000" locked info />
                      </Group>
                    </div>
                  </PriceColumns>
                </PriceArea>
              </Form>
            </Panel>

            <Sidebar>
              <TimeBox>
                <Label htmlFor="te">TE (Std)</Label>
                <Label htmlFor="tr">TR (Std)</Label>
                <Input id="te" $w={66} $tall $right $tone={grey} readOnly defaultValue="1,00" />
                <Input id="tr" $w={73} $tall $right $tone={grey} readOnly defaultValue="2,50" />
                <Label htmlFor="ist">Istzeit (Std)</Label>
                <Input id="ist" $w={73} $tall $right $tone={grey} readOnly defaultValue="0,00" />
              </TimeBox>
              <SideRow $h={23} $gap={1}>
                <Label htmlFor="gew">gew. Liefertermin</Label>
                <Input id="gew" $w={77} $tall defaultValue="17.11.2014" />
              </SideRow>
              <CheckPair>
                <Check text="Fixtermin" />
                <Check text="auf Abruf" />
              </CheckPair>
              <SideRow $h={21} $gap={5}>
                <Input aria-label="Lieferhinweis" />
                <Spacer $w={3} />
                <IconButton $size={24} $h={21} aria-label="Schrift"><FontIcon /></IconButton>
              </SideRow>
              <SideRow $h={23} $gap={4}>
                <Label htmlFor="tats">tats. Lieferdatum</Label>
                <Input id="tats" $w={77} $tall defaultValue="17.11.2014" />
                <Callout>
                  <CalloutLine />
                  <CalloutBadge>1</CalloutBadge>
                  Lieferdaten
                </Callout>
              </SideRow>
              <SideRow $h={23} $gap={49}>
                <Label htmlFor="versand">Versandtermin</Label>
                <Input id="versand" $w={77} $tall defaultValue="  .  ." />
              </SideRow>
              <SideRow $h={25}>
                <Spacer $w={5} />
                <Label htmlFor="swatch" $w={88}>Farbe</Label>
                <Swatch id="swatch" type="color" defaultValue="#000000" />
                <TextButton $w={22} $h={25} $small>...</TextButton>
              </SideRow>
              <SideRow $h={15} $gap={22}>
                <Check text="Nicht im Inhaltsverzeichnis anz." />
              </SideRow>
            </Sidebar>
          </Workspace>

          <Footer>
            <Actions>
              <Action text="OK" w={66}><Tick /></Action>
              <Action text="Abbrechen" w={66}><Cross /></Action>
              <Action text="Neue Position" w={68}><Doc /></Action>
              <Action text="Montagen" w={54} apart><Worker /></Action>
            </Actions>
            <FooterEnd>
              <Action text="Drucken" w={54}><Printer /></Action>
            </FooterEnd>
          </Footer>
        </Content>
      </Window>
    </Page>
  );
}
